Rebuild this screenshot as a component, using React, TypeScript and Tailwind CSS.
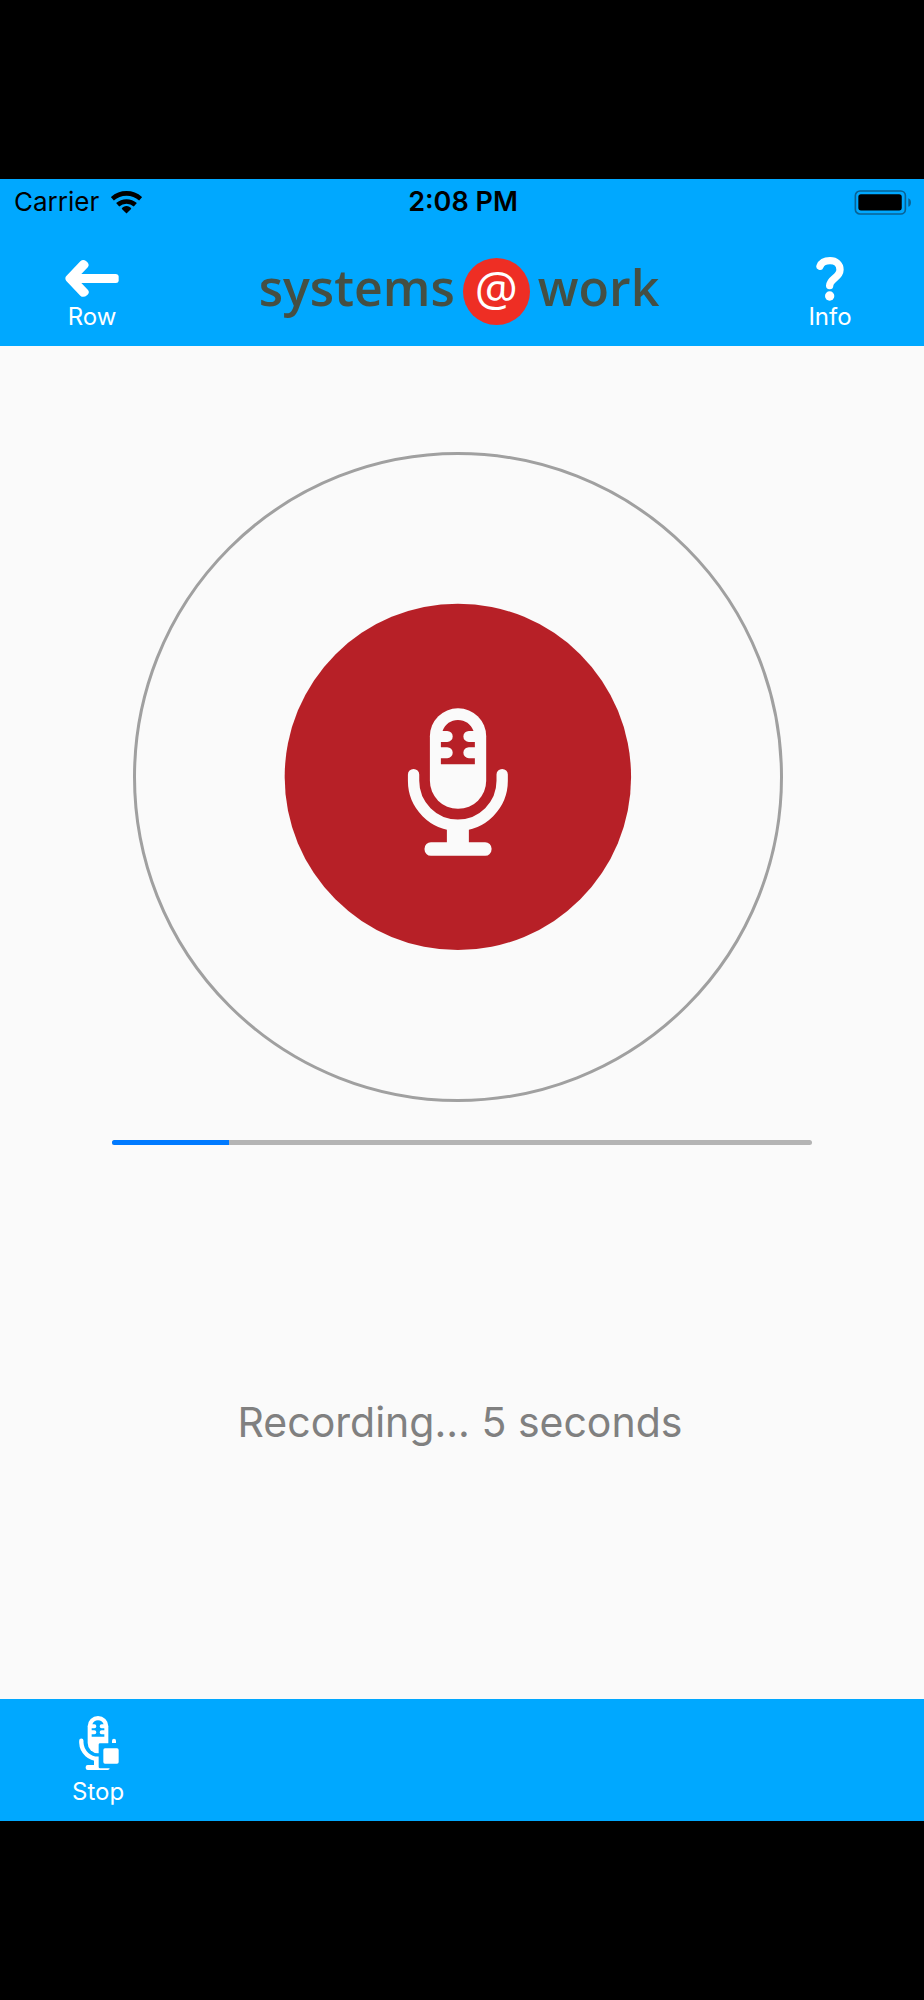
import { useState } from "react";

const MAX_SECONDS = 30;

function WifiIcon() {
  return (
    <svg viewBox="0 0 93 68" className="h-[23px] w-[31px]" aria-hidden="true">
      <g fill="none" stroke="#000" strokeWidth="14">
        <path d="M4 23 A64 64 0 0 1 89 23" />
        <path d="M20 41 A40 40 0 0 1 73 41" />
      </g>
      <path d="M46.500 67 L32 53 A17 17 0 0 1 61 53 Z" />
    </svg>
  );
}

function BatteryIcon() {
  return (
    <svg viewBox="0 0 174 76" className="h-[25px] w-[58px]" aria-hidden="true">
      <rect x="3" y="3" width="152" height="70" rx="14" fill="none" stroke="#0a6294" strokeWidth="5" />
      <rect x="12" y="13" width="132" height="49" rx="8" />
      <path d="M164 25 Q172 28 172 38 T164 51 Z" fill="#0a6294" />
    </svg>
  );
}

function ArrowIcon() {
  return (
    <svg viewBox="0 0 162 132" className="h-11 w-[54px]" aria-hidden="true">
      <path
        d="M1 64 Q1 60 4 57 L46 13 Q54 5 63 12 Q75 21 69 30 L49 51 H153 Q161 52 161 58 V72 Q160 78 153 78 H49 L69 99 Q75 107 67 114 Q55 124 46 116 L4 72 Q1 69 1 64 Z"
        fill="#fff"
      />
    </svg>
  );
}

function QuestionIcon() {
  return (
    <svg viewBox="0 0 84 132" className="h-11 w-7" aria-hidden="true">
      <path
        d="M12 28 C16 17 28 11 42 11 C60 11 72 22 72 38 C72 62 42 64 41 86"
        fill="none"
        stroke="#fff"
        strokeWidth="22"
        strokeLinecap="round"
      />
      <circle cx="41" cy="117" r="14" fill="#fff" />
    </svg>
  );
}

function MicBadge() {
  return (
    <svg viewBox="43 39 1044 1044" className="w-[54%]" role="img" aria-label="Microphone">
      <circle cx="565" cy="561" r="520" fill="#b72027" />
      <g fill="#fafafa">
        <rect x="481" y="355" width="169" height="302" rx="84" />
        <rect x="532" y="700" width="66" height="70" />
        <rect x="465" y="757" width="201" height="41" rx="19" />
      </g>
      <path
        d="M519 423 C527 402 544 390 565 390 C587 390 604 402 612 423 H598 A16 16 0 0 0 598 456 H616 V472 H598 A16 16 0 0 0 598 505 H616 V523 H514 V505 H533 A16 16 0 0 0 533 472 H514 V456 H533 A16 16 0 0 0 533 423 Z"
        fill="#b72027"
      />
      <path
        d="M432 554 V573 A133 133 0 0 0 698 573 V554"
        fill="none"
        stroke="#fafafa"
        strokeWidth="34"
        strokeLinecap="round"
      />
    </svg>
  );
}

function StopIcon() {
  return (
    <svg viewBox="112 105 141 171" className="h-[57px] w-[47px]" aria-hidden="true">
      <g fill="#fff">
        <rect x="150" y="108" width="62" height="112" rx="31" />
        <rect x="169" y="238" width="24" height="22" />
        <rect x="144" y="255" width="72" height="15" rx="6" />
      </g>
      <path d="M131 182 V188 A50 50 0 0 0 185 236" fill="none" stroke="#fff" strokeWidth="13" strokeLinecap="round" />
      <path
        d="M164 133 C167 125 173 121 181 121 C189 121 195 125 198 133 H192 A6 6 0 0 0 192 145 H200 V151 H192 A6 6 0 0 0 192 163 H200 V170 H162 V163 H170 A6 6 0 0 0 170 151 H162 V145 H170 A6 6 0 0 0 170 133 Z"
        fill="#00a8ff"
      />
      <rect x="183" y="190" width="66" height="75" rx="4" fill="#00a8ff" />
      <rect x="197" y="205" width="46" height="46" rx="5" fill="#fff" />
      <path d="M223 189 V182 A6 6 0 0 1 235 182 V189 Z" fill="#fff" />
    </svg>
  );
}

function Logo() {
  return (
    <div className="mr-1 flex items-center gap-2 font-['Open_Sans',sans-serif] text-[50px] leading-[60px] font-semibold text-[#454f43]">
      <span className="pb-2">systems</span>
      <span className="flex size-[67px] justify-center rounded-full bg-[#ee2e24] text-5xl leading-[60px] font-medium text-white">
        @
      </span>
      <span className="pb-2">work</span>
    </div>
  );
}

export default function App() {
  const [seconds] = useState(5);

  return (
    <div className="flex min-h-screen flex-col bg-black py-[179px] font-[Inter,sans-serif]">
      <header className="bg-[#00a8ff]">
        <div className="grid h-[46px] grid-cols-3 items-center pr-3 pl-3.5 text-[26px] leading-8 text-black">
          <div className="flex items-center gap-3">
            <span>Carrier</span>
            <WifiIcon />
          </div>
          <span className="text-center text-[27px] font-semibold">2:08 PM</span>
          <div className="flex justify-end">
            <BatteryIcon />
          </div>
        </div>
        <nav className="flex items-start justify-between pt-8 pr-[66px] pb-[13px] pl-16 text-2xl text-white">
          <button type="button" className="flex w-14 flex-col items-center">
            <ArrowIcon />
            <span>Row</span>
          </button>
          <Logo />
          <button type="button" className="flex w-14 flex-col items-center">
            <QuestionIcon />
            <span>Info</span>
          </button>
        </nav>
      </header>

      <main className="flex flex-1 flex-col items-center bg-[#fafafa] px-28 pt-[106px]">
        <div className="mr-2 flex aspect-square w-full max-w-[650px] items-center justify-center rounded-full border-[3px] border-[#a0a0a0]">
          <MicBadge />
        </div>
        <div
          role="progressbar"
          aria-label="Recording time"
          aria-valuemin={0}
          aria-valuemax={MAX_SECONDS}
          aria-valuenow={seconds}
          className="mt-[38px] h-[5px] w-full overflow-hidden rounded-sm bg-[#b4b4b4]"
        >
          <div className="h-full bg-[#007aff]" style={{ width: `${(seconds / MAX_SECONDS) * 100}%` }} />
        </div>
        <p className="mt-[247px] mr-1 text-[41px] leading-[60px] text-[#808080]">Recording... {seconds} seconds</p>
      </main>

      <footer className="flex bg-[#00a8ff] px-[72px] pt-4 pb-[13px] text-2xl text-white">
        <button type="button" className="flex flex-col items-center gap-1">
          <StopIcon />
          <span>Stop</span>
        </button>
      </footer>
    </div>
  );
}
